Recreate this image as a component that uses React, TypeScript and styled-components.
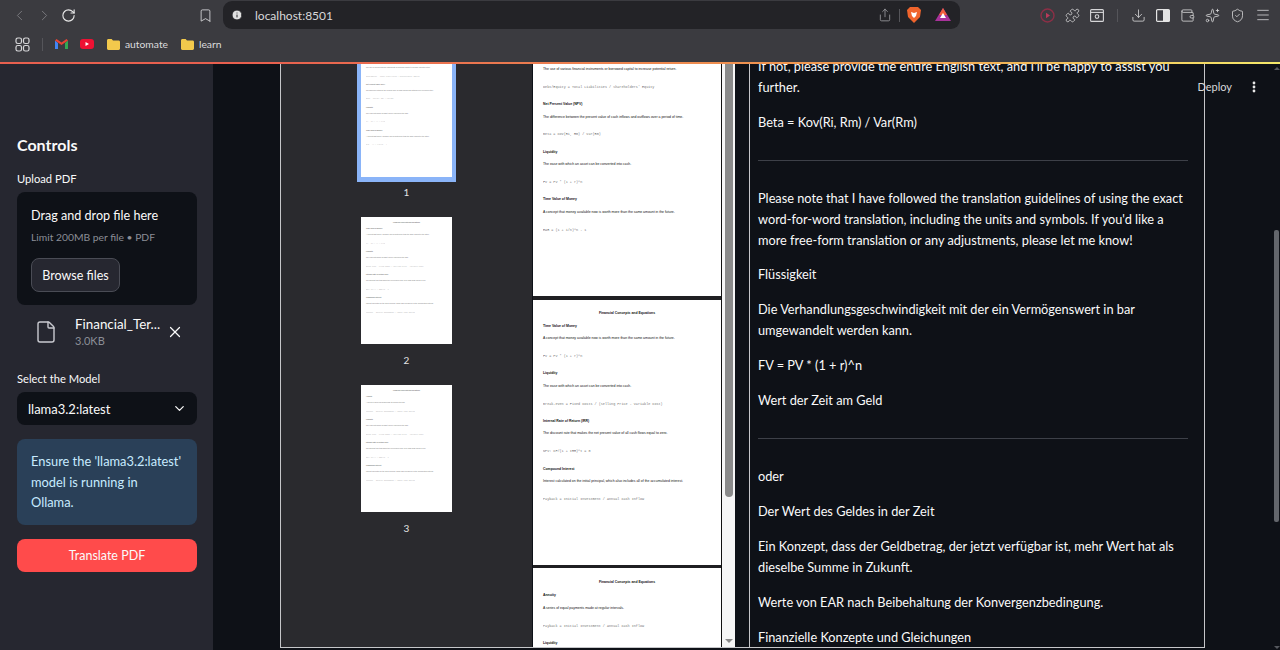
import React from "react";
import styled, { createGlobalStyle } from "styled-components";
import {
  ChevronLeft,
  ChevronRight,
  RotateCw,
  Bookmark,
  Info,
  Share,
  Puzzle,
  Download,
  Wallet,
  Sparkles,
  ShieldCheck,
  Menu,
  ChevronDown,
  X,
  File,
} from "lucide-react";

type Line = { kind: "title" | "head" | "body" | "mono"; text: string };

const tvm: Line[] = [
  { kind: "head", text: "Time Value of Money" },
  { kind: "body", text: "A concept that money available now is worth more than the same amount in the future." },
];

const pageOne: Line[] = [
  { kind: "body", text: "The use of various financial instruments or borrowed capital to increase potential return." },
  { kind: "mono", text: "Debt/Equity = Total Liabilities / Shareholders' Equity" },
  { kind: "head", text: "Net Present Value (NPV)" },
  { kind: "body", text: "The difference between the present value of cash inflows and outflows over a period of time." },
  { kind: "mono", text: "Beta = Cov(Ri, Rm) / Var(Rm)" },
  { kind: "head", text: "Liquidity" },
  { kind: "body", text: "The ease with which an asset can be converted into cash." },
  { kind: "mono", text: "FV = PV * (1 + r)^n" },
  ...tvm,
  { kind: "mono", text: "EAR = (1 + i/n)^n - 1" },
];

const pageTwo: Line[] = [
  { kind: "title", text: "Financial Concepts and Equations" },
  ...tvm,
  { kind: "mono", text: "FV = PV * (1 + r)^n" },
  { kind: "head", text: "Liquidity" },
  { kind: "body", text: "The ease with which an asset can be converted into cash." },
  { kind: "mono", text: "Break-even = Fixed Costs / (Selling Price - Variable Cost)" },
  { kind: "head", text: "Internal Rate of Return (IRR)" },
  { kind: "body", text: "The discount rate that makes the net present value of all cash flows equal to zero." },
  { kind: "mono", text: "NPV: CF/(1 + IRR)^t = 0" },
  { kind: "head", text: "Compound Interest" },
  { kind: "body", text: "Interest calculated on the initial principal, which also includes all of the accumulated interest." },
  { kind: "mono", text: "Payback = Initial Investment / Annual Cash Inflow" },
];

const pageThree: Line[] = [
  { kind: "title", text: "Financial Concepts and Equations" },
  { kind: "head", text: "Annuity" },
  { kind: "body", text: "A series of equal payments made at regular intervals." },
  { kind: "mono", text: "Payback = Initial Investment / Annual Cash Inflow" },
  { kind: "head", text: "Liquidity" },
  { kind: "body", text: "The ease with which an asset can be converted into cash." },
];

const GlobalStyle = createGlobalStyle`
  html, body { margin: 0; padding: 0; height: 650px; overflow: hidden; background: #0e1117; }
  * { box-sizing: border-box; }
  body { font-family: Lato, "Noto Sans", sans-serif; }
`;

const Shell = styled.div`
  width: 1280px;
  height: 650px;
  display: flex;
  flex-direction: column;
  overflow: hidden;
`;

const Chrome = styled.div`
  height: 62px;
  flex: none;
  background: #3b3b40;
  color: #d6d6d8;
  display: flex;
  flex-direction: column;
`;

const TopRow = styled.div`
  height: 30px;
  display: flex;
  align-items: center;
  padding: 0 0 0 11px;
  svg { flex: none; }
`;

const NavIcons = styled.div`
  display: flex;
  align-items: center;
  gap: 8px;
  width: 187px;
  flex: none;
  svg:nth-child(-n + 2) { color: #77777c; }
`;

const Address = styled.div`
  width: 737px;
  height: 28px;
  flex: none;
  margin-left: 10px;
  border-radius: 9px;
  background: #232327;
  display: flex;
  align-items: center;
  font-size: 12px;
  color: #d8d8da;
  padding: 0 9px 0 8px;
`;

const AddressText = styled.span`
  margin-left: 12px;
  flex: 1;
`;

const AddressEnd = styled.div`
  display: flex;
  align-items: center;
  gap: 7px;
`;

const ToolIcons = styled.div`
  display: flex;
  align-items: center;
  margin-left: 80px;
  gap: 10px;
`;

const Divider = styled.i`
  display: block;
  flex: none;
  width: 1px;
  height: 13px;
  background: #55555a;
`;

const ToolDivider = styled(Divider)`
  margin: 0 3px;
`;

const LogoGap = styled.span`
  display: flex;
  margin-right: 7px;
`;

const BookmarkRow = styled.div`
  height: 28px;
  display: flex;
  align-items: center;
  padding-left: 15px;
  gap: 12px;
  font-size: 10.3px;
  color: #dcdcde;
`;

const FolderItem = styled.span`
  display: flex;
  align-items: center;
  gap: 5px;
  margin-left: 1px;
`;

const GradientLine = styled.div`
  height: 2px;
  flex: none;
  background: linear-gradient(90deg, #e8604f 0%, #e8604f 20%, #f0a050 70%, #f5e96a 100%);
`;

const Body = styled.div`
  flex: 1;
  display: flex;
  min-height: 0;
  position: relative;
`;

const Sidebar = styled.aside`
  width: 213px;
  flex: none;
  background: #262730;
  padding: 70px 16px 0 17px;
  color: #fafafa;
  display: flex;
  flex-direction: column;
`;

const SideTitle = styled.h2`
  margin: 0 0 15px;
  font-size: 16px;
  line-height: 22px;
  font-weight: 700;
`;

const FieldLabel = styled.div`
  font-size: 11.2px;
  line-height: 16px;
`;

const Dropzone = styled.div`
  margin-top: 5px;
  height: 113px;
  border-radius: 8px;
  background: #0e1117;
  padding: 14px 14px;
`;

const DropTitle = styled.div`
  font-size: 12.6px;
  line-height: 20px;
`;

const DropHint = styled.div`
  font-size: 10.3px;
  line-height: 16px;
  margin-top: 3px;
  color: #8b8e96;
`;

const BrowseButton = styled.button`
  display: block;
  width: 89px;
  height: 34px;
  margin-top: 13px;
  border: 1px solid #4a4c55;
  border-radius: 8px;
  background: #262730;
  color: #fafafa;
  font: inherit;
  font-size: 12.5px;
  padding: 0;
`;

const FileRow = styled.div`
  display: flex;
  align-items: center;
  height: 47px;
  margin-top: 3px;
  padding-left: 17px;
  color: #c9cad0;
`;

const FileMeta = styled.div`
  margin-left: 17px;
  width: 91px;
`;

const FileName = styled.div`
  font-size: 13.4px;
  line-height: 18px;
  color: #fafafa;
  white-space: nowrap;
`;

const FileSize = styled.div`
  font-size: 11px;
  line-height: 16px;
  color: #8b8e96;
`;

const ModelLabel = styled(FieldLabel)`
  margin-top: 16px;
`;

const SelectBox = styled.div`
  margin-top: 5px;
  height: 33px;
  border-radius: 8px;
  background: #0e1117;
  display: flex;
  align-items: center;
  justify-content: space-between;
  padding: 0 10px 0 11px;
  font-size: 13px;
`;

const InfoBox = styled.div`
  margin-top: 14px;
  height: 86px;
  border-radius: 8px;
  background: #2a4058;
  color: #c7ebff;
  font-size: 12.85px;
  line-height: 20.5px;
  padding: 12px 14px;
`;

const TranslateButton = styled.button`
  margin-top: 14px;
  height: 33px;
  border: none;
  border-radius: 8px;
  background: #ff4b4b;
  color: #fafafa;
  font: inherit;
  font-size: 12.5px;
  padding: 0;
`;

const Main = styled.main`
  flex: 1;
  min-width: 0;
  background: #0e1117;
  padding: 0 0 2px 67px;
  display: flex;
`;

const Viewer = styled.section`
  width: 925px;
  height: 100%;
  border: 1px solid #c5c6c9;
  border-top: none;
  display: flex;
  overflow: hidden;
`;

const Thumbnails = styled.div`
  width: 251px;
  flex: none;
  background: #2a2a2e;
  display: flex;
  flex-direction: column;
  align-items: center;
  margin-top: -18px;
`;

const ThumbFrame = styled.div<{ $active?: boolean }>`
  padding: 4px;
  background: ${(p) => (p.$active ? "#8ab4f8" : "transparent")};
  ${(p) => p.$active && "padding-bottom: 5px; margin-bottom: -2px;"}
`;

const ThumbLabel = styled.div`
  color: #e4e4e4;
  font-size: 10px;
  line-height: 14px;
  margin: 5px 0 14px;
`;

const PageColumn = styled.div`
  width: 188px;
  flex: none;
  margin-left: 1px;
  display: flex;
  flex-direction: column;
  gap: 3.5px;
  background: #1f1f22;
`;

const Sheet = styled.div<{ $w: number; $h: number; $fs: number; $pad: string; $faint?: boolean }>`
  width: ${(p) => p.$w}px;
  height: ${(p) => p.$h}px;
  flex: none;
  background: #fff;
  overflow: hidden;
  font-size: ${(p) => p.$fs}px;
  padding: ${(p) => p.$pad};
  font-family: "Liberation Sans", Arial, sans-serif;
  color: ${(p) => (p.$faint ? "#777" : "#111")};
`;

const SheetLine = styled.div<{ $kind: Line["kind"] }>`
  white-space: nowrap;
  line-height: 1em;
  ${(p) =>
    p.$kind === "title"
      ? "font-weight:700; text-align:center; height:3.87em;"
      : p.$kind === "head"
      ? "font-weight:700; height:3.6em;"
      : p.$kind === "body"
      ? "height:5.15em;"
      : "font-family:'Liberation Mono',monospace; opacity:.6; height:5.05em;"}
`;

const ViewerBar = styled.div`
  width: 14px;
  flex: none;
  border-left: 1px solid #111;
  padding: 0 2px 0 3px;
  display: flex;
  flex-direction: column;
  justify-content: space-between;
  align-items: center;
  background: #f6f6f6;
`;

const ViewerThumb = styled.div`
  width: 8px;
  height: 433px;
  background: #8a8a8a;
  border-radius: 0 0 4px 4px;
`;

const Arrow = styled.div`
  width: 0;
  height: 0;
  border-left: 4px solid transparent;
  border-right: 4px solid transparent;
  border-top: 4px solid #8a8a8a;
  margin-bottom: 4px;
`;

const TextPanel = styled.div`
  margin-left: 14px;
  flex: 1;
  min-width: 0;
  border-left: 1px solid #c5c6c9;
  padding: 0 16px 0 8px;
  color: #fafafa;
  font-size: 12.75px;
  line-height: 20.9px;
  overflow: hidden;
`;

const TextInner = styled.div`
  margin-top: -8px;
`;

const Para = styled.p`
  margin: 0 0 14px;
`;

const Rule = styled.hr`
  border: none;
  border-top: 1px solid #3d4048;
  margin: 27px 0 27px;
`;

const HeaderActions = styled.div`
  position: absolute;
  top: 13px;
  right: 24px;
  display: flex;
  align-items: center;
  gap: 20px;
  color: #d8d8da;
  font-size: 11px;
  line-height: 20px;
`;

const PageScroll = styled.div`
  position: absolute;
  top: 0;
  right: 0;
  bottom: 0;
  width: 7px;
  display: flex;
  flex-direction: column;
  align-items: center;
`;

const PageThumb = styled.div`
  width: 5px;
  height: 292px;
  margin-top: 160px;
  margin-bottom: 124px;
  background: #63666c;
  border-radius: 2px;
`;

const SmallArrow = styled.div<{ $up?: boolean }>`
  width: 0;
  height: 0;
  margin-top: ${(p) => (p.$up ? "3px" : "0")};
  border-left: 3px solid transparent;
  border-right: 3px solid transparent;
  ${(p) => (p.$up ? "border-bottom: 3px solid #55585e;" : "border-top: 3px solid #55585e;")}
`;

const Page = ({
  lines,
  w,
  h,
  fs,
  pad,
  faint,
}: {
  lines: Line[];
  w: number;
  h: number;
  fs: number;
  pad: string;
  faint?: boolean;
}) => (
  <Sheet $w={w} $h={h} $fs={fs} $pad={pad} $faint={faint}>
    {lines.map((l, i) => (
      <SheetLine key={i} $kind={l.kind}>
        {l.text}
      </SheetLine>
    ))}
  </Sheet>
);

// thumbnails are the same pages at about half scale
const Thumb = ({ lines, n, active }: { lines: Line[]; n: number; active?: boolean }) => (
  <>
    <ThumbFrame $active={active}>
      <Page lines={lines} w={91} h={127} fs={1.66} pad={active ? "17px 5px 0" : "5px 5px 0"} faint />
    </ThumbFrame>
    <ThumbLabel>{n}</ThumbLabel>
  </>
);

const Folder = () => (
  <svg width="13" height="11" viewBox="0 0 13 11">
    <path d="M0 1.5C0 .7.6 0 1.4 0h3.2l1.4 1.6h5.6c.8 0 1.4.6 1.4 1.4v6.6c0 .8-.6 1.4-1.4 1.4H1.4C.6 11 0 10.4 0 9.6z" fill="#f2c94c" />
  </svg>
);

const Gmail = () => (
  <svg width="13" height="10" viewBox="0 0 13 10">
    <path d="M0 1.5v8.5h3V4z" fill="#4285f4" />
    <path d="M10 4v6h3V1.5z" fill="#34a853" />
    <path d="M0 1.5 6.5 6 13 1.5 11.5 0 6.5 3.5 1.5 0z" fill="#ea4335" />
  </svg>
);

const Youtube = () => (
  <svg width="14" height="10" viewBox="0 0 14 10">
    <rect width="14" height="10" rx="3" fill="#ee1133" />
    <path d="M5.5 3v4L9 5z" fill="#fff" />
  </svg>
);

const Grid = () => (
  <svg width="15" height="15" viewBox="0 0 15 15" fill="none" stroke="#d6d6d8" strokeWidth="1.2">
    <rect x="1" y="1" width="5.5" height="5.5" rx="1.8" />
    <rect x="8.5" y="1" width="5.5" height="5.5" rx="1.8" />
    <rect x="1" y="8.5" width="5.5" height="5.5" rx="1.8" />
    <rect x="8.5" y="8.5" width="5.5" height="5.5" rx="1.8" />
  </svg>
);

const Lion = () => (
  <svg width="14" height="16" viewBox="0 0 14 16">
    <path d="M3 0h8l3 3-1 7-6 6-6-6-1-7z" fill="#f0642c" />
    <path d="M4 5l3 1 3-1-1 4-2 2-2-2z" fill="#fff" />
  </svg>
);

const Bat = () => (
  <svg width="16" height="14" viewBox="0 0 16 14">
    <path d="M8 0l8 13H0z" fill="#a8329a" />
    <path d="M8 0l4 7H4z" fill="#f2603c" />
    <path d="M8 5l3 5H5z" fill="#fff" />
  </svg>
);

const Player = () => (
  <svg width="15" height="15" viewBox="0 0 15 15" fill="none">
    <circle cx="7.5" cy="7.5" r="6.5" stroke="#8c2f46" strokeWidth="1.4" />
    <path d="M6 4.8v5.4l4-2.7z" fill="#b93a5a" />
  </svg>
);

const Panel = () => (
  <svg width="14" height="13" viewBox="0 0 14 13">
    <rect x=".6" y=".6" width="12.8" height="11.8" rx="1" fill="none" stroke="#e4e4e4" strokeWidth="1.2" />
    <rect x="7" y="1" width="6.5" height="11" fill="#e4e4e4" />
  </svg>
);

const Capture = () => (
  <svg width="14" height="13" viewBox="0 0 14 13" fill="none" stroke="#d6d6d8" strokeWidth="1.1">
    <rect x=".6" y=".6" width="12.8" height="11.8" rx="1" />
    <path d="M.6 3.4h12.8" />
    <circle cx="7" cy="7.6" r="1.8" />
  </svg>
);

const Dots = () => (
  <svg width="4" height="12" viewBox="0 0 4 12" fill="#e8e8e8">
    <circle cx="2" cy="2" r="1.4" />
    <circle cx="2" cy="6" r="1.4" />
    <circle cx="2" cy="10" r="1.4" />
  </svg>
);

const App = () => (
  <Shell>
    <GlobalStyle />
    <Chrome>
      <TopRow>
        <NavIcons>
          <ChevronLeft size={17} strokeWidth={1.4} />
          <ChevronRight size={17} strokeWidth={1.4} />
          <RotateCw size={15} strokeWidth={1.8} color="#e8e8e8" />
        </NavIcons>
        <Bookmark size={15} strokeWidth={1.4} />
        <Address>
          <Info size={12} fill="#e0e0e0" color="#232327" />
          <AddressText>localhost:8501</AddressText>
          <AddressEnd>
            <Share size={14} strokeWidth={1.3} color="#a8a8ac" />
            <Divider />
            <LogoGap>
              <Lion />
            </LogoGap>
            <Bat />
          </AddressEnd>
        </Address>
        <ToolIcons>
          <Player />
          <Puzzle size={15} strokeWidth={1.3} />
          <Capture />
          <ToolDivider />
          <Download size={15} strokeWidth={1.3} />
          <Panel />
          <Wallet size={15} strokeWidth={1.3} />
          <Sparkles size={15} strokeWidth={1.3} />
          <ShieldCheck size={15} strokeWidth={1.3} />
          <Menu size={16} strokeWidth={1.2} />
        </ToolIcons>
      </TopRow>
      <BookmarkRow>
        <Grid />
        <Divider />
        <Gmail />
        <Youtube />
        <FolderItem>
          <Folder />
          automate
        </FolderItem>
        <FolderItem>
          <Folder />
          learn
        </FolderItem>
      </BookmarkRow>
    </Chrome>
    <GradientLine />
    <Body>
      <Sidebar>
        <SideTitle>Controls</SideTitle>
        <FieldLabel>Upload PDF</FieldLabel>
        <Dropzone>
          <DropTitle>Drag and drop file here</DropTitle>
          <DropHint>Limit 200MB per file • PDF</DropHint>
          <BrowseButton>Browse files</BrowseButton>
        </Dropzone>
        <FileRow>
          <File size={24} strokeWidth={1.4} />
          <FileMeta>
            <FileName>Financial_Ter...</FileName>
            <FileSize>3.0KB</FileSize>
          </FileMeta>
          <X size={18} strokeWidth={1.6} color="#fafafa" />
        </FileRow>
        <ModelLabel>Select the Model</ModelLabel>
        <SelectBox>
          llama3.2:latest
          <ChevronDown size={15} strokeWidth={2} />
        </SelectBox>
        <InfoBox>Ensure the 'llama3.2:latest' model is running in Ollama.</InfoBox>
        <TranslateButton>Translate PDF</TranslateButton>
      </Sidebar>
      <Main>
        <Viewer>
          <Thumbnails>
            <Thumb lines={pageOne} n={1} active />
            <Thumb lines={pageTwo} n={2} />
            <Thumb lines={pageThree.concat(pageTwo.slice(6))} n={3} />
          </Thumbnails>
          <PageColumn>
            <Page lines={pageOne} w={188} h={232} fs={3.45} pad="4px 10px 0" />
            <Page lines={pageTwo} w={188} h={265} fs={3.45} pad="12px 10px 0" />
            <Page lines={pageThree} w={188} h={80} fs={3.45} pad="13px 10px 0" />
          </PageColumn>
          <ViewerBar>
            <ViewerThumb />
            <Arrow />
          </ViewerBar>
          <TextPanel>
            <TextInner>
              <Para>If not, please provide the entire English text, and I'll be happy to assist you further.</Para>
              <Para>Beta = Kov(Ri, Rm) / Var(Rm)</Para>
              <Rule />
              <Para>
                Please note that I have followed the translation guidelines of using the exact word-for-word
                translation, including the units and symbols. If you'd like a more free-form translation or any
                adjustments, please let me know!
              </Para>
              <Para>Flüssigkeit</Para>
              <Para>Die Verhandlungsgeschwindigkeit mit der ein Vermögenswert in bar umgewandelt werden kann.</Para>
              <Para>FV = PV * (1 + r)^n</Para>
              <Para>Wert der Zeit am Geld</Para>
              <Rule />
              <Para>oder</Para>
              <Para>Der Wert des Geldes in der Zeit</Para>
              <Para>
                Ein Konzept, dass der Geldbetrag, der jetzt verfügbar ist, mehr Wert hat als dieselbe Summe in Zukunft.
              </Para>
              <Para>Werte von EAR nach Beibehaltung der Konvergenzbedingung.</Para>
              <Para>Finanzielle Konzepte und Gleichungen</Para>
            </TextInner>
          </TextPanel>
        </Viewer>
      </Main>
      <HeaderActions>
        <span>Deploy</span>
        <Dots />
      </HeaderActions>
      <PageScroll>
        <SmallArrow $up />
        <PageThumb />
        <SmallArrow />
      </PageScroll>
    </Body>
  </Shell>
);

export default App;
